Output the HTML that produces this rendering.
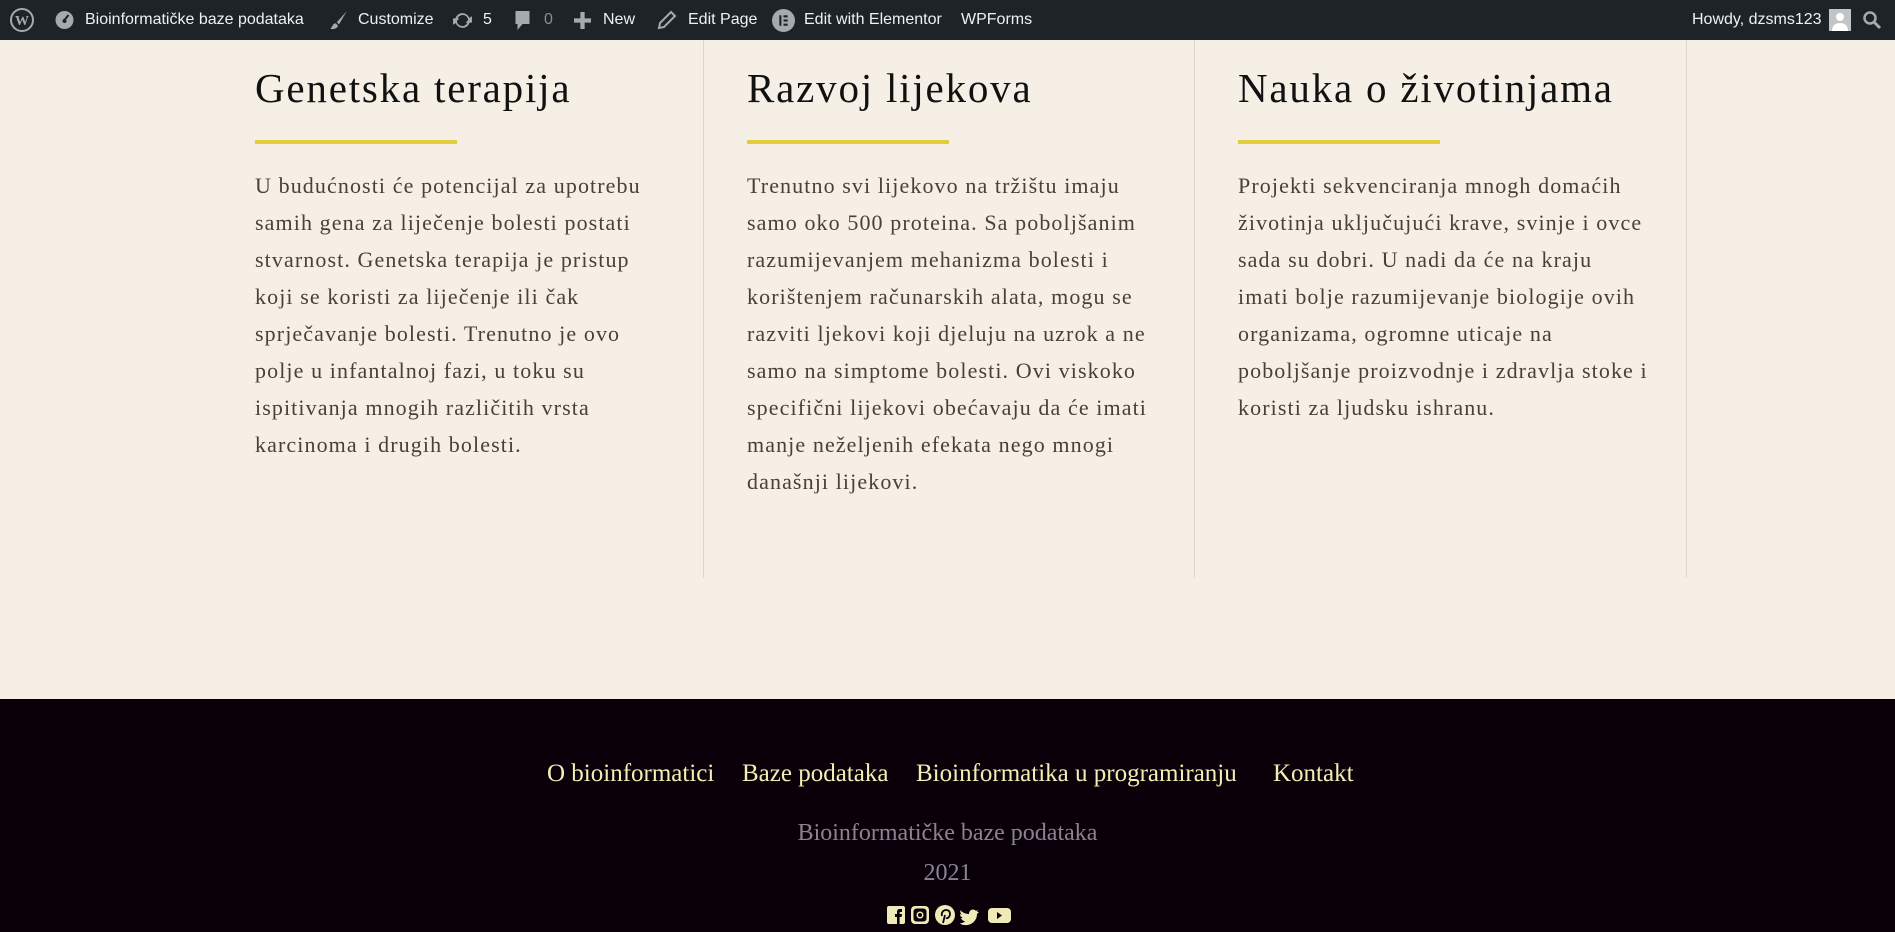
<!DOCTYPE html>
<html><head><meta charset="utf-8">
<style>
*{margin:0;padding:0;box-sizing:border-box}
body{width:1895px;height:932px;overflow:hidden;background:#f5efe6;position:relative;font-family:"Liberation Serif",serif}
#ab{position:absolute;left:0;top:0;width:1895px;height:40px;background:#1d2327;color:#f0f0f1;font-family:"Liberation Sans",sans-serif;font-size:16px}
#ab span,#ab svg{position:absolute}
#ab span{top:11px;white-space:nowrap}
.vd{position:absolute;top:40px;width:1px;height:538px;background:#dcd8d0}
h2{position:absolute;top:64px;font-weight:400;font-size:41px;color:#111;white-space:nowrap;letter-spacing:1.8px}
.ul{position:absolute;top:140px;width:202px;height:4px;background:#e2cd3a}
.tx{position:absolute;top:167px;font-size:22px;line-height:37px;color:#4a403b;white-space:nowrap;letter-spacing:1.1px}
#ft{position:absolute;left:0;top:699px;width:1895px;height:233px;background:#0a0009}
.nav{position:absolute;top:760px;font-size:25px;color:#f3eeb4;white-space:nowrap}
.c{position:absolute;left:0;width:1895px;text-align:center;font-size:24px;color:#8b8393}
</style></head><body>
<div id="ab">
<svg style="left:10px;top:8px" width="24" height="24" viewBox="0 0 24 24"><circle cx="12" cy="12" r="11" fill="none" stroke="#a7aaad" stroke-width="2"/><text x="12" y="17" font-size="14" text-anchor="middle" fill="#a7aaad" font-family="Liberation Serif" font-weight="bold">W</text></svg>
<svg style="left:54px;top:10px" width="21" height="20" viewBox="0 0 20 20"><circle cx="10" cy="10" r="9" fill="#a7aaad"/><path d="M10 10 L14 5" stroke="#1d2327" stroke-width="2"/><circle cx="10" cy="11" r="2" fill="#1d2327"/></svg>
<span style="left:85px">Bioinformatičke baze podataka</span>
<svg style="left:328px;top:9px" width="22" height="22" viewBox="0 0 20 20"><path d="M17 2 L8 12 L10 14 Z M7 13 C4 13 4 17 2 18 C6 19 9 17 9 15Z" fill="#a7aaad"/></svg>
<span style="left:358px">Customize</span>
<svg style="left:452px;top:10px" width="21" height="21" viewBox="0 0 20 20"><path d="M10 3a7 7 0 0 1 6.5 4.5L19 6v6h-6l2.3-2.3A5 5 0 0 0 5 10H3a7 7 0 0 1 7-7zM10 17a7 7 0 0 1-6.5-4.5L1 14V8h6L4.7 10.3A5 5 0 0 0 15 10h2a7 7 0 0 1-7 7z" fill="#a7aaad"/></svg>
<span style="left:483px">5</span>
<svg style="left:513px;top:10px" width="19" height="22" viewBox="0 0 18 22"><path d="M2 1h14v13H9l-5 6v-6H2z" fill="#a7aaad"/></svg>
<span style="left:544px;color:#8c8f94">0</span>
<svg style="left:574px;top:12px" width="17" height="17" viewBox="0 0 16 16"><path d="M6 0h4v6h6v4h-6v6H6v-6H0V6h6z" fill="#a7aaad"/></svg>
<span style="left:603px">New</span>
<svg style="left:657px;top:10px" width="20" height="20" viewBox="0 0 20 20"><path d="M14 2l4 4-11 11-5 1 1-5z" fill="none" stroke="#a7aaad" stroke-width="2"/></svg>
<span style="left:688px">Edit Page</span>
<svg style="left:772px;top:9px" width="23" height="23" viewBox="0 0 22 22"><circle cx="11" cy="11" r="11" fill="#a7aaad"/><rect x="7" y="6" width="2" height="10" fill="#1d2327"/><rect x="11" y="6" width="4" height="2" fill="#1d2327"/><rect x="11" y="10" width="4" height="2" fill="#1d2327"/><rect x="11" y="14" width="4" height="2" fill="#1d2327"/></svg>
<span style="left:804px">Edit with Elementor</span>
<span style="left:961px">WPForms</span>
<span style="left:1692px">Howdy, dzsms123</span>
<svg style="left:1829px;top:9px" width="22" height="22" viewBox="0 0 22 22"><rect width="22" height="22" fill="#c3c4c7"/><circle cx="11" cy="8" r="4" fill="#fff"/><path d="M3 22c0-6 4-8 8-8s8 2 8 8z" fill="#fff"/></svg>
<svg style="left:1862px;top:10px" width="20" height="20" viewBox="0 0 20 20"><circle cx="8" cy="8" r="5.5" fill="none" stroke="#a7aaad" stroke-width="2.5"/><path d="M12 12l6 6" stroke="#a7aaad" stroke-width="3"/></svg>
</div>

<div class="vd" style="left:703px"></div>
<div class="vd" style="left:1194px"></div>
<div class="vd" style="left:1686px"></div>

<h2 style="left:255px">Genetska terapija</h2>
<div class="ul" style="left:255px"></div>
<div class="tx" style="left:255px">U budućnosti će potencijal za upotrebu<br>samih gena za liječenje bolesti postati<br>stvarnost. Genetska terapija je pristup<br>koji se koristi za liječenje ili čak<br>sprječavanje bolesti. Trenutno je ovo<br>polje u infantalnoj fazi, u toku su<br>ispitivanja mnogih različitih vrsta<br>karcinoma i drugih bolesti.</div>

<h2 style="left:747px">Razvoj lijekova</h2>
<div class="ul" style="left:747px"></div>
<div class="tx" style="left:747px">Trenutno svi lijekovo na tržištu imaju<br>samo oko 500 proteina. Sa poboljšanim<br>razumijevanjem mehanizma bolesti i<br>korištenjem računarskih alata, mogu se<br>razviti ljekovi koji djeluju na uzrok a ne<br>samo na simptome bolesti. Ovi viskoko<br>specifični lijekovi obećavaju da će imati<br>manje neželjenih efekata nego mnogi<br>današnji lijekovi.</div>

<h2 style="left:1238px">Nauka o životinjama</h2>
<div class="ul" style="left:1238px"></div>
<div class="tx" style="left:1238px">Projekti sekvenciranja mnogh domaćih<br>životinja uključujući krave, svinje i ovce<br>sada su dobri. U nadi da će na kraju<br>imati bolje razumijevanje biologije ovih<br>organizama, ogromne uticaje na<br>poboljšanje proizvodnje i zdravlja stoke i<br>koristi za ljudsku ishranu.</div>

<div id="ft"></div>
<div class="nav" style="left:547px">O bioinformatici</div>
<div class="nav" style="left:742px">Baze podataka</div>
<div class="nav" style="left:916px">Bioinformatika u programiranju</div>
<div class="nav" style="left:1273px">Kontakt</div>
<div class="c" style="top:820px">Bioinformatičke baze podataka</div>
<div class="c" style="top:860px">2021</div>
<svg style="position:absolute;left:886px;top:904px" width="128" height="22" viewBox="0 0 128 22">
<g fill="#f0eab8">
<rect x="1" y="2" width="18" height="18" rx="2"/><path d="M11 20v-7h-2v-3h2V8c0-2 1-3 3-3h2v3h-1.5c-.7 0-.9.4-.9 1v1H16l-.4 3h-2v7z" fill="#0a0009"/>
<rect x="25" y="2" width="18" height="18" rx="4"/><rect x="27.5" y="4.5" width="13" height="13" rx="3" fill="#0a0009"/><circle cx="34" cy="11" r="3.5"/><circle cx="34" cy="11" r="2" fill="#0a0009"/>
<circle cx="59" cy="11" r="10"/><path d="M57 19l2-8M56 12c-1-3 1-6 4-6s4 2 4 4-2 5-4 4" fill="none" stroke="#0a0009" stroke-width="1.8"/>
<path d="M74 6c3 3 6 4 9 4 0-4 4-6 7-3l2-1-1 2 2 0-2 2c0 7-6 12-13 11-2 0-3-1-4-2 2 0 4 0 5-2-2 0-3-1-4-3h2c-2-1-3-2-3-4l2 1c-2-2-2-4-1-5z"/>
<rect x="102" y="4" width="23" height="15" rx="4"/><path d="M111 8v7l5-3.5z" fill="#0a0009"/>
</g></svg>
</body></html>
